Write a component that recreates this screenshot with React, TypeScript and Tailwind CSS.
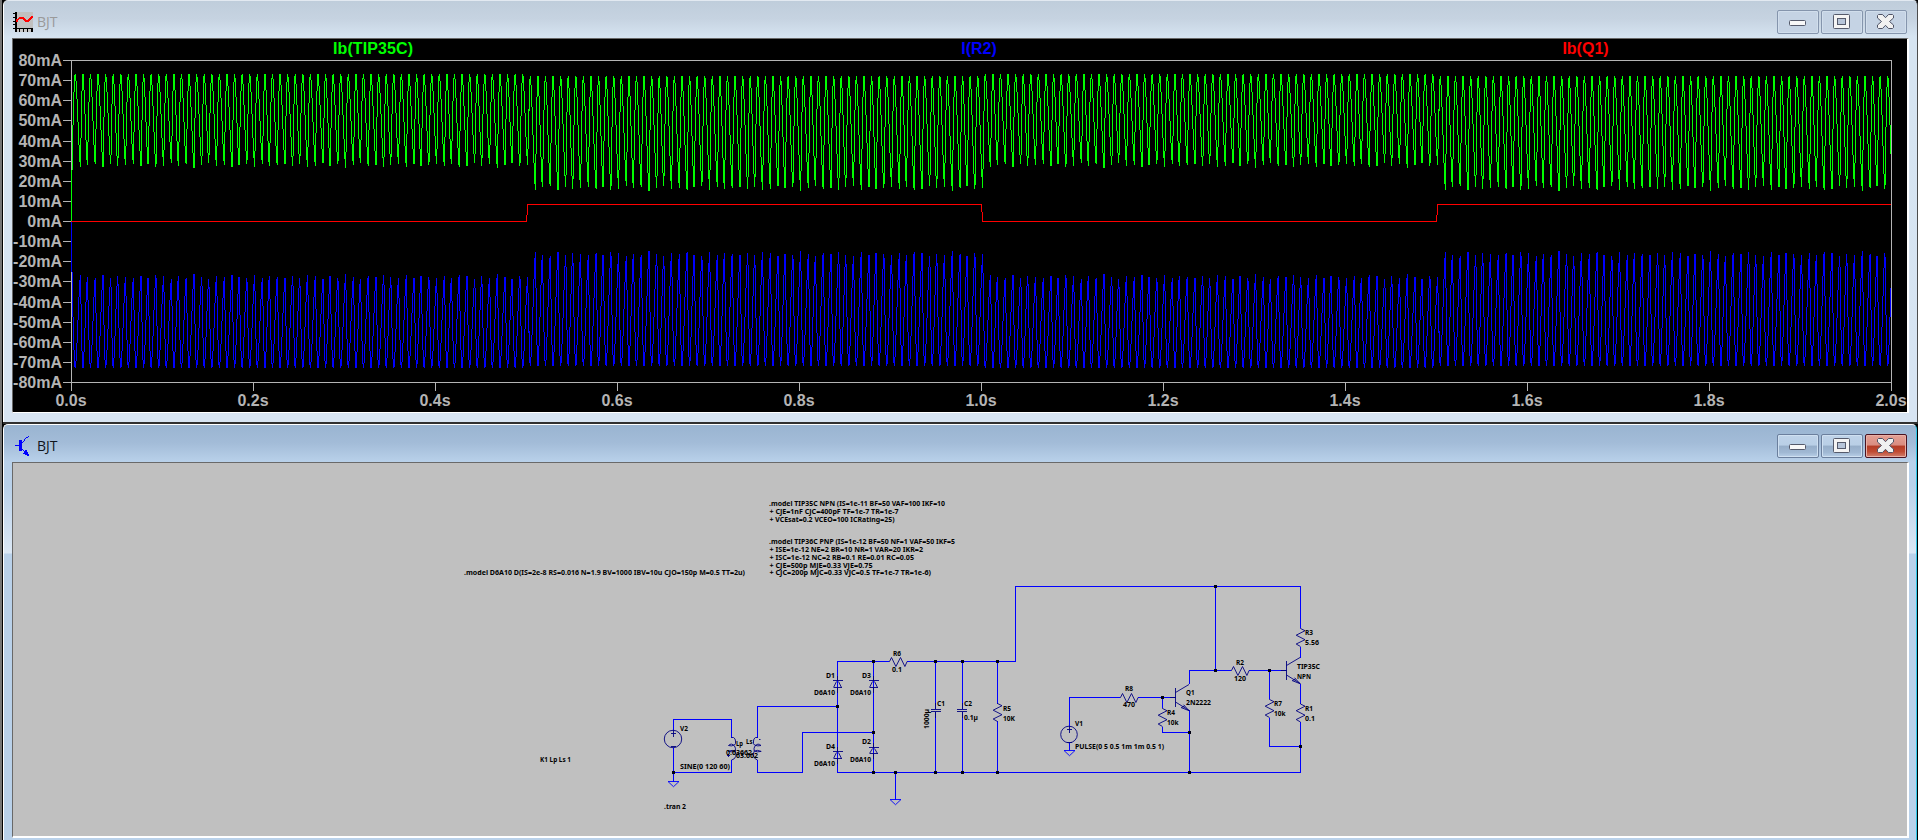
import type { ReactNode } from "react";

/* ---------- waveform geometry ---------- */

const PLOT = { left: 71, right: 1891, top: 60, bottom: 382, zero: 221 };
const PERIOD = 1820 / 240;

const isPulsed = (x: number) => (x >= 529 && x < 985) || x >= 1439;

function level(x: number) {
  if (x < 75.4) {
    return 221 - 147 * Math.sin((Math.PI / 2) * ((x - 71) / 4.4));
  }
  // the simulator's time step is uneven, so extremes vary a little per cycle
  const k = Math.floor((x - 75.4) / PERIOD);
  const peak = isPulsed(x) ? 76 : 74;
  const trough = (isPulsed(x) ? 191 : 168) - ((k * 7) % 5) * 0.9;
  const u = (x - 75.4) % PERIOD;
  const rise = 2.5 + ((k * 3) % 4) * 0.2;
  const fall = PERIOD - rise;
  let v: number;
  if (u < fall) {
    const s = u / fall;
    v = 1 - (0.5 * s + 0.25 * (1 - Math.cos(Math.PI * s)));
  } else {
    v = Math.sin((Math.PI / 2) * ((u - fall) / rise));
  }
  return trough + (peak - trough) * v;
}

function columns(mirror: boolean) {
  let d = "";
  for (let x = PLOT.left; x < PLOT.right; x++) {
    let lo = Infinity;
    let hi = -Infinity;
    for (let i = 0; i <= 6; i++) {
      const y = level(x + i / 6);
      lo = Math.min(lo, y);
      hi = Math.max(hi, y);
    }
    if (mirror) [lo, hi] = [442 - hi, 442 - lo];
    const a = Math.round(lo);
    const b = Math.max(a + 1, Math.round(hi));
    d += `M${x} ${a}h1V${b}h-1z`;
  }
  return d;
}

const GREEN = columns(false);
const BLUE = columns(true);

const Y_TICKS = [80, 70, 60, 50, 40, 30, 20, 10, 0, -10, -20, -30, -40, -50, -60, -70, -80];
const X_TICKS = [0, 1, 2, 3, 4, 5, 6, 7, 8, 9, 10];

function Waveforms() {
  return (
    <svg
      className="block h-[373px] w-[1894px] bg-black font-['Liberation_Sans',Arial,sans-serif] text-[16px] font-bold"
      viewBox="13 39 1894 373"
    >
      <g shapeRendering="crispEdges">
        <path
          d="M71 60.5H1891.5V391M71.5 60V391M63 382.5H1891"
          fill="none"
          stroke="#b4b4b4"
        />
        {Y_TICKS.map((v) => {
          const y = Math.round(PLOT.zero - v * 2.0125) + 0.5;
          return <path key={v} d={`M63 ${y}h8`} stroke="#b4b4b4" />;
        })}
        {X_TICKS.map((i) => (
          <path key={i} d={`M${71.5 + i * 182} 382v9`} stroke="#b4b4b4" />
        ))}
        <path d={BLUE} fill="#0000ff" />
        <path d={GREEN} fill="#00ff00" />
        <path
          d="M71 221.5H526.5V215M527.5 215V204.5H981.5V212M982.5 212V221.5H1436.5V215M1437.5 215V204.5H1891"
          fill="none"
          stroke="#ff0000"
        />
      </g>
      <g fill="#b4b4b4">
        {Y_TICKS.map((v) => (
          <text key={v} x={62} y={Math.round(PLOT.zero - v * 2.0125) + 6} textAnchor="end">
            {v}mA
          </text>
        ))}
        {X_TICKS.map((i) => (
          <text key={i} x={71 + i * 182} y={406} textAnchor="middle">
            {(i / 5).toFixed(1)}s
          </text>
        ))}
      </g>
      <g textAnchor="middle">
        <text x={373} y={54} fill="#00ff00" textLength={80} lengthAdjust="spacing">Ib(TIP35C)</text>
        <text x={979} y={54} fill="#0000ff">I(R2)</text>
        <text x={1585.5} y={54} fill="#ff0000">Ib(Q1)</text>
      </g>
    </svg>
  );
}

/* ---------- schematic ---------- */

const WIRES = [
  "M673.5 730V719.5H731.5V738",
  "M673.5 748V781.5M673.5 772.5H731.5V760",
  "M757.5 738V706.5H837.5",
  "M757.5 760V772.5H802.5V732.5H873.5",
  "M889 661.5H837.5V772.5H1300.5",
  "M873.5 661.5V772.5",
  "M907 661.5H1015.5V586.5H1300.5V628",
  "M935.5 661.5V709M935.5 712V772.5",
  "M962.5 661.5V709M962.5 712V772.5",
  "M997.5 661.5V704M997.5 721V772.5",
  "M895.5 772.5V799.5",
  "M1215.5 586.5V670.5M1189.5 684V670.5H1231M1249 670.5H1286",
  "M1300.5 647V658M1300.5 684V704M1300.5 722V773",
  "M1269.5 670.5V699M1269.5 718V746.5H1300.5",
  "M1069.5 727V697.5H1120M1138 697.5H1175M1069.5 743V750.5",
  "M1162.5 697.5V708M1162.5 727V732.5H1189.5M1189.5 710V772.5",
];

const DOTS: [number, number][] = [
  [673, 772], [837, 706], [873, 661], [873, 732], [873, 772], [895, 772], [935, 661],
  [935, 772], [962, 661], [962, 772], [997, 661], [997, 772], [1215, 586], [1215, 670],
  [1269, 670], [1300, 746], [1162, 697], [1189, 732], [1189, 772],
];

const RESISTORS_V: [number, number][] = [
  [997.5, 703], [1300.5, 628], [1300.5, 703.5], [1269.5, 699], [1162.5, 708],
];
const RESISTORS_H: [number, number][] = [[889, 661.5], [1231, 670.5], [1120, 697.5]];
const DIODES: [number, number, number][] = [
  [837.5, 680.5, 7], [837.5, 751.5, 7], [873.5, 680.5, 7], [873.5, 747.5, 6],
];
const GROUNDS: [number, number][] = [[673.5, 781.5], [895.5, 799.5], [1069.5, 750.5]];
const TRANSISTORS: [number, number][] = [[1175.5, 697.5], [1286.5, 670.5]];
const SOURCES: [number, number, number][] = [[673, 739, 8.7], [1069, 734.5, 8.3]];

// text, left, baseline, width
const LABELS: [string, number, number, number][] = [
  [".model TIP35C NPN (IS=1e-11 BF=50 VAF=100 IKF=10", 769, 506, 176],
  ["+ CJE=1nF CJC=400pF TF=1e-7 TR=1e-7", 769.5, 514, 129],
  ["+ VCEsat=0.2 VCEO=100 ICRating=25)", 769.5, 522, 125],
  [".model TIP36C PNP (IS=1e-12 BF=50 NF=1 VAF=50 IKF=5", 769, 544, 186],
  ["+ ISE=1e-12 NE=2 BR=10 NR=1 VAR=20 IKR=2", 769.5, 552, 153.5],
  ["+ ISC=1e-12 NC=2 RB=0.1 RE=0.01 RC=0.05", 769.5, 560, 144.5],
  ["+ CJE=500p MJE=0.33 VJE=0.75", 769.5, 568, 103],
  ["+ CJC=200p MJC=0.33 VJC=0.5 TF=1e-7 TR=1e-6)", 769.5, 575, 161.5],
  [".model D6A10 D(IS=2e-8 RS=0.016 N=1.9 BV=1000 IBV=10u CJO=150p M=0.5 TT=2u)", 464, 575, 281],
  ["K1 Lp Ls 1", 540, 762, 31],
  [".tran 2", 664, 809, 22],
  ["V2", 680, 731, 8],
  ["SINE(0 120 60)", 680, 769, 50],
  ["Lp", 736, 746, 7],
  ["Ls", 746, 744, 6.5],
  ["0.63662", 726, 755, 26],
  ["63.662", 736, 758, 22],
  ["D1", 826, 678, 9],
  ["D6A10", 814, 695, 21],
  ["D3", 862, 678, 9],
  ["D6A10", 850, 695, 21],
  ["D4", 826, 749, 9],
  ["D6A10", 814, 766, 21],
  ["D2", 862, 744, 9],
  ["D6A10", 850, 762, 21],
  ["R6", 893, 656, 8],
  ["0.1", 892, 672, 10],
  ["C1", 937, 706, 8],
  ["C2", 964, 706, 8],
  ["0.1µ", 964, 720, 14],
  ["R5", 1003, 711, 8],
  ["10K", 1003, 721, 12],
  ["V1", 1075, 726, 8],
  ["PULSE(0 5 0.5 1m 1m 0.5 1)", 1075, 749, 89],
  ["R8", 1125, 691, 8],
  ["470", 1123, 707, 12],
  ["R4", 1167, 715, 8],
  ["10k", 1167, 725, 11.5],
  ["Q1", 1186, 695, 8.5],
  ["2N2222", 1186, 705, 25],
  ["R2", 1236, 665, 8],
  ["120", 1234, 681, 12],
  ["R7", 1274, 706, 8],
  ["10k", 1274, 716, 11.5],
  ["R3", 1305, 635, 8],
  ["5.56", 1305, 645, 14],
  ["TIP35C", 1297, 669, 23],
  ["NPN", 1297, 679, 14],
  ["R1", 1305, 711, 8],
  ["0.1", 1305, 721, 10],
];

function Schematic() {
  return (
    <svg
      className="block h-[373px] w-[1894px] bg-[#c0c0c0] font-['Noto_Sans','Open_Sans',sans-serif] text-[7px] font-bold"
      viewBox="13 463 1894 373"
    >
      <path d={WIRES.join("")} fill="none" stroke="#0000ff" shapeRendering="crispEdges" />
      <g fill="none" stroke="#000080" strokeWidth={0.9}>
        {RESISTORS_V.map(([x, y]) => (
          <path
            key={`${x}-${y}`}
            d={`M${x} ${y}v.5l4.5 2.2l-8.8 4.5l8.8 4.5l-8.8 4.3l4.3 2.5`}
          />
        ))}
        {RESISTORS_H.map(([x, y]) => (
          <path key={`${x}-${y}`} d={`M${x} ${y}h.5l2 -4l4.4 9l4.6 -9l4.4 9l2.2 -5`} />
        ))}
        {DIODES.map(([x, y, h]) => (
          <g key={`${x}-${y}`}>
            <path
              d={`M${x} ${y - 5}v5M${x - 4.5} ${y}h9.5M${x - 4} ${y + h}h8.5M${x} ${y + h}v5`}
              shapeRendering="crispEdges"
            />
            <path d={`M${x - 4} ${y + h}l3 -${h - 1}M${x + 4} ${y + h}l-3 -${h - 1}`} />
          </g>
        ))}
        <path
          d="M931 709.5h10M931 711.5h10M957 709.5h10M957 711.5h10M935.5 703v6M935.5 712v6M962.5 703v6M962.5 712v6"
          shapeRendering="crispEdges"
        />
        {TRANSISTORS.map(([x, y]) => (
          <g key={x}>
            <path d={`M${x} ${y - 9.5}v19M${x - 6} ${y}h6`} shapeRendering="crispEdges" />
            <path
              d={`M${x} ${y - 5}l13.5 -8M${x} ${y + 4.5}l14 8.7M${x + 5.5} ${y + 10}l8 3.2l-5.5 -6M${x + 6} ${y + 10}l3 -1.5`}
            />
          </g>
        ))}
        {SOURCES.map(([x, y, r]) => (
          <g key={x}>
            <circle cx={x} cy={y} r={r} />
            <path
              d={`M${x + 0.5} ${y - r}v6.5M${x - 2} ${y - 5.5}h5M${x - 2} ${y + 7.5}h5`}
              shapeRendering="crispEdges"
            />
          </g>
        ))}
        <path d="M731.5 737.5h2q2 1 2 3.5q.5 3-1 4q-3 1.500-6 .5q3-3 6 .5q1.500 2 .8 5q-3 1.500-7 .4q4-2 7-.2q1.500 3 .4 5.500q-1.500 3-4.200 3.300" />
        <path d="M757.5 737.5h-2q-2 1-2 3.500q-.5 3 1 4q3 1.500 6.500 .5q-3-3-6 .5q-1.500 2-.8 5q3 1.500 7 .4q-4-2-7-.2q-1.500 3-.4 5.500q1.500 3 3.700 3.300" />
        <path d="M727 755.5h3M728.500 754v3M759 739.5h1.500" />
      </g>
      <g fill="none" stroke="#0000ff" strokeWidth={0.9}>
        {GROUNDS.map(([x, y]) => (
          <path key={x} d={`M${x - 5.5} ${y}h11l-5.500 5.200z`} />
        ))}
      </g>
      <g fill="#000010" shapeRendering="crispEdges">
        {DOTS.map(([x, y]) => (
          <rect key={`${x}-${y}`} x={x - 1} y={y - 1} width={3} height={3} />
        ))}
      </g>
      <g fill="#000000">
        {LABELS.map(([t, x, y, w]) => (
          <text
            key={`${x}-${y}`}
            x={x}
            y={y}
            textLength={w}
            lengthAdjust="spacingAndGlyphs"
          >
            {t}
          </text>
        ))}
        <text
          transform="translate(929 729) rotate(-90)"
          textLength={20}
          lengthAdjust="spacingAndGlyphs"
        >
          1000µ
        </text>
      </g>
    </svg>
  );
}

/* ---------- window chrome ---------- */

function PlotIcon() {
  return (
    <svg className="h-5 w-5" viewBox="0 0 20 20" shapeRendering="crispEdges">
      <path d="M4 0H20V16H4z" fill="#c0c0c0" />
      <path d="M4 17h16v3H4z" fill="#c8c8c8" />
      <path
        d="M2 0h2v20h-2zM0 1h2v1H0zM0 5h2v1H0zM0 9h2v1H0zM0 12h2v1H0zM0 16h20v1H0zM6 17h1v3h-1zM10 17h1v3h-1zM14 17h1v3h-1zM18 17h2v3h-2z"
        fill="#000"
      />
      <path d="M4 10V8L7 6H10L13 9H15L19.500 4.500" fill="none" stroke="#f00" strokeWidth="1.500" />
    </svg>
  );
}

function TransistorIcon() {
  return (
    <svg className="h-5 w-5" viewBox="0 0 20 20" shapeRendering="crispEdges">
      <path
        d="M2 9h4v1H2zM6 4h3v11H6zM9 6h1v1H9zM10 5h1v1h-1zM11 3h1v2h-1zM12 2h1v1h-1zM13 1h2v1h-2zM15 0h1v1h-1zM9 13h1v1H9zM10 14h1v1h-1zM11 15h1v-1h2v2h1v2h1v2h-2v-1h-2v-1h-2v-1h1z"
        fill="#00f"
      />
    </svg>
  );
}

const GLYPHS: Record<string, ReactNode> = {
  minimize: (
    <rect x="12.500" y="10.500" width="16" height="5" rx="1" fill="#f8f8f8" stroke="#555a6b" />
  ),
  maximize: (
    <>
      <rect x="12.500" y="4.500" width="16" height="14" rx="1" fill="#f4f4f4" stroke="#555a6b" />
      <rect x="16.500" y="8.500" width="8" height="6" fill="#b7c5d9" stroke="#555a6b" />
    </>
  ),
  close: (
    <path
      d="M13.500 4.500h4l3 3.200l3-3.200h4l1 1v2.500l-4 3.500l4 3.500v2.500l-1 1h-4l-3-3.200l-3 3.200h-4l-1-1v-2.500l4-3.500l-4-3.500v-2.500z"
      fill="#f1f1f1"
      stroke="#4f5366"
    />
  ),
};

function CaptionButton({ kind, active }: { kind: string; active: boolean }) {
  const skin = !active
    ? "border-[#8595ad] bg-[#c5d3e4] shadow-[inset_0_0_0_1px_#d1deec]"
    : kind === "close"
      ? "border-[#4a1220] bg-[linear-gradient(#e5a095_0%,#d98c80_46%,#b43b25_50%,#c04a32_75%,#d0806f_100%)] shadow-[inset_0_0_0_1px_#e8b0a6]"
      : "border-[#6b7f9d] bg-[linear-gradient(#bfd3e9_0%,#b9cfe6_46%,#96aec9_50%,#a1b9d4_80%,#b9d0e8_100%)] shadow-[inset_0_0_0_1px_#cfe0f1]";
  return (
    <button
      type="button"
      aria-label={kind}
      className={`h-6 w-[42px] rounded-[2px] border ${skin}`}
    >
      <svg className="-ml-px -mt-px block h-6 w-[42px]" viewBox="0 0 42 24">
        {GLYPHS[kind]}
      </svg>
    </button>
  );
}

function TitleBar({ icon, active }: { icon: ReactNode; active: boolean }) {
  return (
    <header
      className={`flex h-[37px] items-start justify-between pl-[9px] ${
        active ? "pr-[9px]" : "pr-[10px]"
      }`}
    >
      <div className="flex items-center gap-1 pt-[11px]">
        {icon}
        <h1
          className={`font-['Open_Sans','Noto_Sans',sans-serif] text-[14px] leading-5 ${
            active ? "text-[#10151c]" : "text-[#9a9a9a]"
          }`}
        >
          BJT
        </h1>
      </div>
      <div className="flex gap-0.5 pt-[9px]">
        <CaptionButton kind="minimize" active={active} />
        <CaptionButton kind="maximize" active={active} />
        <CaptionButton kind="close" active={active} />
      </div>
    </header>
  );
}

export default function App() {
  return (
    <main className="flex h-[840px] w-[1918px] flex-col overflow-hidden border-l-2 border-[#767676] bg-black pl-px">
      <section className="h-[422px] w-[1915px] rounded-t-[5px] border-l border-r border-t border-l-white border-r-[#4c4c4c] border-t-[#e2e9f1] bg-[linear-gradient(#bfcddb_0px,#c6d3e1_18px,#d6e4f1_36px,#d7e4f2_100%)]">
        <TitleBar icon={<PlotIcon />} active={false} />
        <div className="ml-2 h-[375px] w-[1897px] border-b-2 border-l border-r-2 border-t border-b-white border-l-[#696969] border-r-white border-t-[#696969]">
          <Waveforms />
        </div>
      </section>
      <div className="h-0.5 shrink-0 bg-[#303030]" />
      <section className="h-[416px] w-[1914px] rounded-t-[5px] border-l border-r border-t border-l-white border-r-[#30c8e8] border-t-white bg-[linear-gradient(#99b4d1_0px,#a3bcd8_18px,#b9d1ea_37px,#b9d1ea_60px,#dce8f5_128px,#b9d1ea_129px)]">
        <TitleBar icon={<TransistorIcon />} active />
        <div className="ml-2 h-[376px] w-[1897px] border-b-2 border-l border-r-2 border-t border-b-white border-l-[#696969] border-r-white border-t-[#696969]">
          <Schematic />
        </div>
      </section>
    </main>
  );
}
